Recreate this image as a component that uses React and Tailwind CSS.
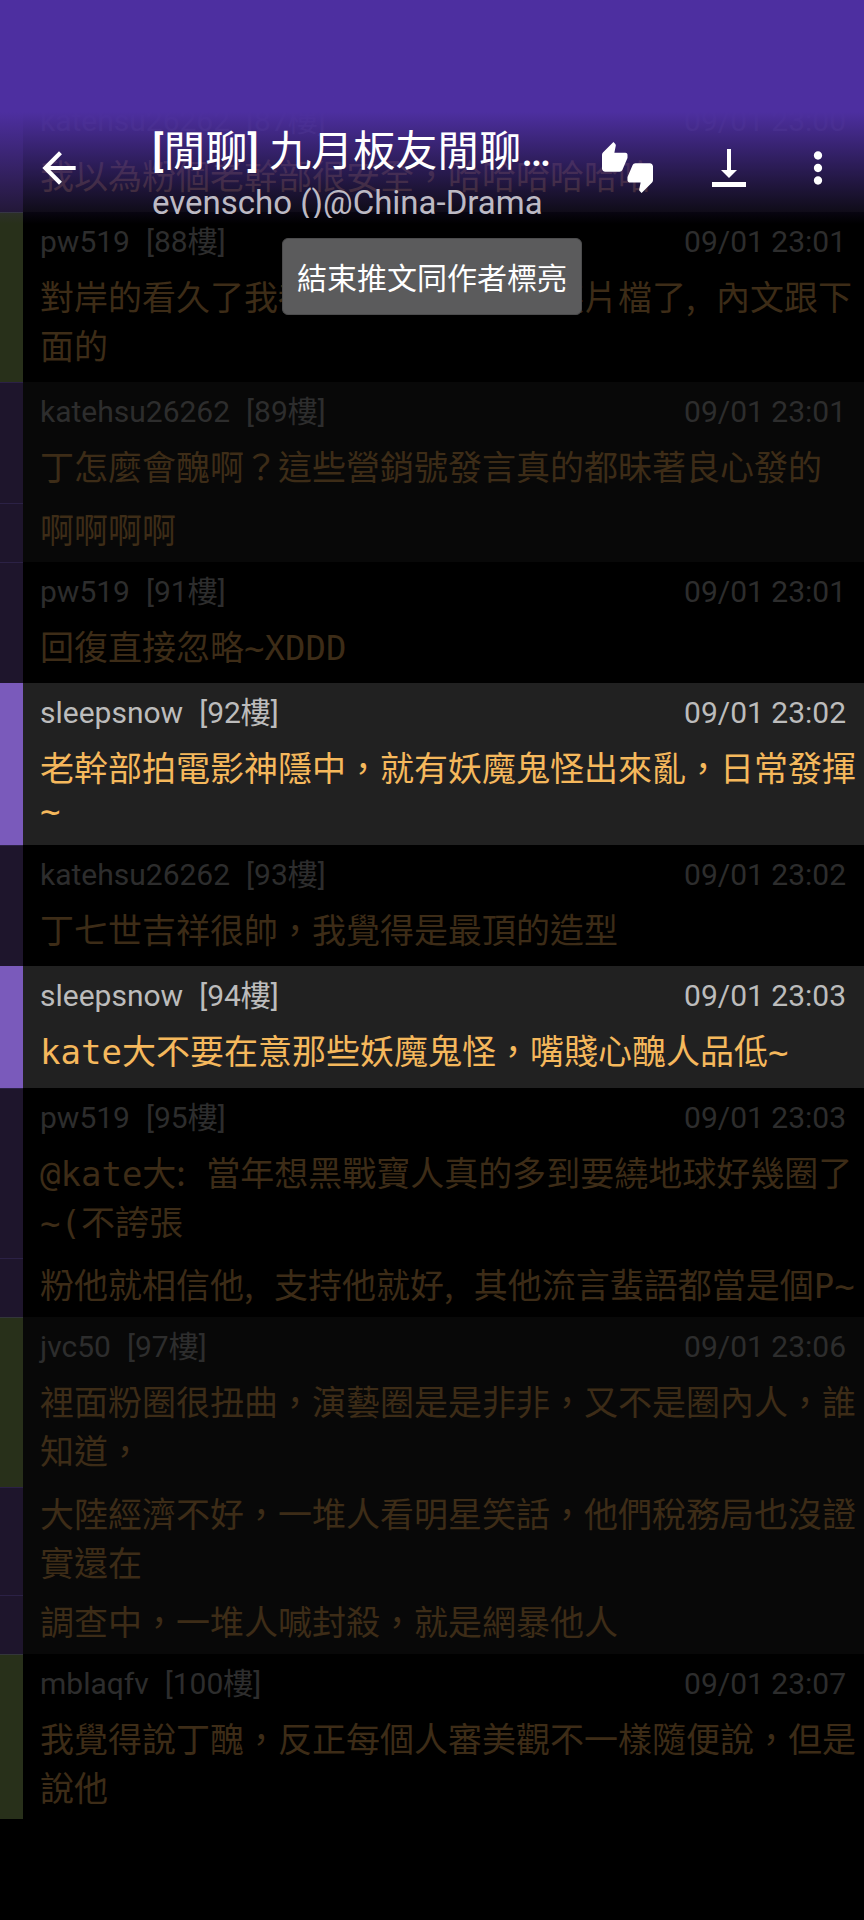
import React from "react";
import clsx from "clsx";
import { MdArrowBack, MdMoreVert, MdThumbsUpDown } from "react-icons/md";

const comments = [
  { author: "katehsu26262", floor: 87, time: "09/01 23:00", kind: "arrow", shade: true, text: "我以為粉個老幹部很安全，哈哈哈哈哈哈" },
  { author: "pw519", floor: 88, time: "09/01 23:01", kind: "push", text: "對岸的看久了我都快忘了這是部古裝片檔了, 內文跟下面的" },
  { author: "katehsu26262", floor: 89, time: "09/01 23:01", kind: "arrow", shade: true, text: "丁怎麼會醜啊？這些營銷號發言真的都昧著良心發的" },
  { floor: 90, kind: "arrow", shade: true, text: "啊啊啊啊" },
  { author: "pw519", floor: 91, time: "09/01 23:01", kind: "arrow", text: "回復直接忽略~XDDD" },
  { author: "sleepsnow", floor: 92, time: "09/01 23:02", kind: "arrow", active: true, text: "老幹部拍電影神隱中，就有妖魔鬼怪出來亂，日常發揮~" },
  { author: "katehsu26262", floor: 93, time: "09/01 23:02", kind: "arrow", text: "丁七世吉祥很帥，我覺得是最頂的造型" },
  { author: "sleepsnow", floor: 94, time: "09/01 23:03", kind: "arrow", active: true, text: "kate大不要在意那些妖魔鬼怪，嘴賤心醜人品低~" },
  { author: "pw519", floor: 95, time: "09/01 23:03", kind: "arrow", text: "@kate大: 當年想黑戰寶人真的多到要繞地球好幾圈了~(不誇張" },
  { floor: 96, kind: "arrow", text: "粉他就相信他, 支持他就好, 其他流言蜚語都當是個P~" },
  { author: "jvc50", floor: 97, time: "09/01 23:06", kind: "push", shade: true, text: "裡面粉圈很扭曲，演藝圈是是非非，又不是圈內人，誰知道，" },
  { floor: 98, kind: "arrow", shade: true, text: "大陸經濟不好，一堆人看明星笑話，他們稅務局也沒證實還在" },
  { floor: 99, kind: "arrow", shade: true, text: "調查中，一堆人喊封殺，就是網暴他人" },
  { author: "mblaqfv", floor: 100, time: "09/01 23:07", kind: "push", text: "我覺得說丁醜，反正每個人審美觀不一樣隨便說，但是說他" },
];

// commas and colons use the proportional CJK glyphs, other latin stays mono
function CommentText({ text }) {
  return text.split(/([,:])/).map((part, index) =>
    part === "," || part === ":" ? (
      <span key={index} className="font-['Noto_Sans_CJK_TC',sans-serif]">
        {part}
      </span>
    ) : (
      part
    )
  );
}

function Comment({ comment, last }) {
  const { author, floor, time, kind, active, shade, text } = comment;

  return (
    <li
      className={clsx(
        "flex",
        active ? "bg-[#212121]" : shade ? "bg-[#080808]" : "bg-black"
      )}
    >
      <div
        className={clsx(
          "w-[23px] shrink-0 border-t",
          active
            ? "bg-[#7a5abb] border-[#7a5abb]"
            : kind === "push"
            ? "bg-[#28301a] border-[#33363a]"
            : "bg-[#1e152c] border-[#2b2145]"
        )}
      />
      <div
        className={clsx(
          "flex-1 min-w-0 pl-[17px]",
          !author ? "pb-[9px] pt-px" : last ? "pb-2" : active ? "pb-[14px]" : "pb-[13px]"
        )}
      >
        {author && (
          <div
            className={clsx(
              "h-[59px] pt-2 pr-[18px] flex justify-between font-[Roboto,'Noto_Sans_CJK_TC',sans-serif] text-[30px] leading-[44px]",
              active ? "text-[#bcbcbc]" : "text-[#2d2d2d]"
            )}
          >
            <div className="flex gap-4">
              <span>{author}</span>
              <span>[{floor}樓]</span>
            </div>
            <time>{time}</time>
          </div>
        )}
        <p
          className={clsx(
            "pr-[6px] break-all font-['DejaVu_Sans_Mono','Noto_Sans_CJK_TC',monospace] text-[34px] leading-[normal]",
            active ? "text-[#f5b85c]" : "text-[#3d2c17]"
          )}
        >
          <CommentText text={text} />
        </p>
      </div>
    </li>
  );
}

function DownloadIcon() {
  return (
    <svg width="34" height="38" viewBox="0 0 34 38" fill="currentColor">
      <path d="M15 0h4v21h6l-8 8-8-8h6z" />
      <path d="M0 33h34v5H0z" />
    </svg>
  );
}

function AppBar() {
  return (
    <header className="absolute inset-x-0 top-0 pt-[112px] bg-linear-to-b from-[#4d2fa0] from-50% to-transparent text-white">
      <div className="h-[112px] flex">
        <button type="button" aria-label="Back" className="w-[118px] shrink-0 flex items-center justify-center">
          <MdArrowBack size={50} />
        </button>
        <div className="flex-1 min-w-0 h-[106px] ml-[34px] pt-2 overflow-hidden whitespace-nowrap font-[Roboto,'Noto_Sans_CJK_TC',sans-serif]">
          <h1 className="text-[42px] leading-[64px]">
            <span className="font-medium">[</span>閒聊<span className="font-medium">]</span> 九月板友閒聊<span className="font-medium">…</span>
          </h1>
          <div className="text-[33px] leading-[38px] text-[#bdbac4]">evenscho ()@China-Drama</div>
        </div>
        <div className="h-[111px] pr-[7px] shrink-0 flex">
          <button type="button" aria-label="Rate" className="w-[101px] flex items-center justify-center">
            <MdThumbsUpDown size={51} />
          </button>
          <button type="button" aria-label="Scroll to bottom" className="w-[101px] flex items-center justify-center">
            <DownloadIcon />
          </button>
          <button type="button" aria-label="More" className="w-[78px] flex items-center justify-center">
            <MdMoreVert size={50} />
          </button>
        </div>
      </div>
    </header>
  );
}

export default function App() {
  return (
    <div className="relative min-h-screen bg-black overflow-hidden" lang="zh-Hant">
      <ul className="pt-[91px]">
        {comments.map((comment, index) => (
          <Comment
            key={comment.floor}
            comment={comment}
            last={index === comments.length - 1}
          />
        ))}
      </ul>
      <AppBar />
      <div
        role="status"
        className="absolute top-[238px] left-1/2 -translate-x-1/2 px-[14px] py-4 rounded-md bg-[#5b5b5c] border border-[#4c4c4d] whitespace-nowrap text-white font-['Noto_Sans_CJK_TC',sans-serif] text-[30px] leading-[43px]"
      >
        結束推文同作者標亮
      </div>
    </div>
  );
}
